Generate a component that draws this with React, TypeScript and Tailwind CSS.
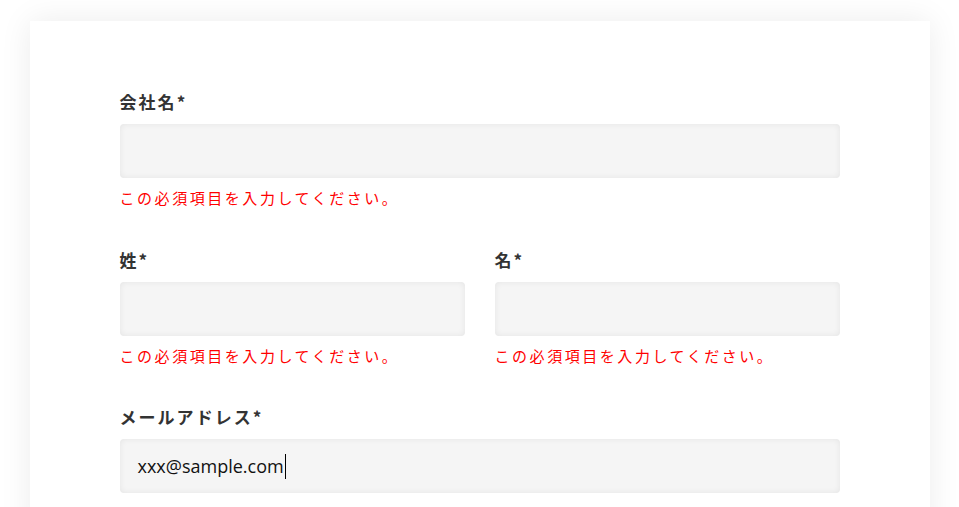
import React from "react";

const jp = { fontFamily: '"Noto Sans CJK JP", "Noto Sans", sans-serif' };

function Label({ text }: { text: string }) {
  return (
    <label className="block text-[17px] leading-[24px] font-bold tracking-[0.12em] text-[#333333] mb-[10px]" style={jp}>
      {text}*
    </label>
  );
}

function Input({ value, caret }: { value?: string; caret?: boolean }) {
  return (
    <div className="h-[54px] w-full rounded-[4px] bg-[#f5f5f5] shadow-[inset_0_0_6px_rgba(0,0,0,0.07)] flex items-center px-[18px]">
      {value && (
        <span className="text-[18px] text-[#111] flex items-center" style={{ fontFamily: '"Open Sans", "Noto Sans", sans-serif' }}>
          {value}
          {caret && <span className="inline-block w-[1px] h-[25px] bg-black ml-[1px]" />}
        </span>
      )}
    </div>
  );
}

function Error() {
  return (
    <p className="mt-[10px] text-[15px] leading-[20px] tracking-[0.17em] text-[#ff0000]" style={jp}>
      この必須項目を入力してください。
    </p>
  );
}

export default function App() {
  return (
    <div className="min-h-[507px] bg-white pt-[21px] overflow-hidden">
      <div className="mx-auto w-[900px] bg-white shadow-[0_0_30px_rgba(0,0,0,0.08)] px-[90px] pt-[69px] pb-[40px]">
        <div>
          <Label text="会社名" />
          <Input />
          <Error />
        </div>
        <div className="grid grid-cols-2 gap-[30px] mt-[40px]">
          <div>
            <Label text="姓" />
            <Input />
            <Error />
          </div>
          <div>
            <Label text="名" />
            <Input />
            <Error />
          </div>
        </div>
        <div className="mt-[39px]">
          <Label text="メールアドレス" />
          <Input value="xxx@sample.com" caret />
        </div>
      </div>
    </div>
  );
}
